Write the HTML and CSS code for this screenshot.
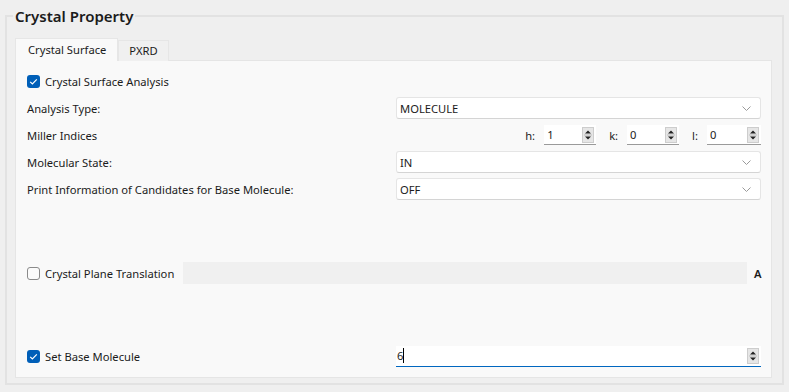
FILE: index.html
```html
<!DOCTYPE html>
<html lang="en">

<head>
    <meta charset="UTF-8">
    <title>Crystal Property</title>
    <link rel="stylesheet" href="styles.css">
</head>

<body>
    <fieldset class="group">
        <legend>Crystal Property</legend>

        <div class="tabs">
            <div class="tab active">Crystal Surface</div>
            <div class="tab narrow">PXRD</div>
        </div>

        <div class="panel">
            <div class="check-row">
                <span class="box on"><svg width="13" height="13" viewBox="0 0 13 13"><polyline points="3.2,6.8 5.4,9 9.8,4.4" fill="none" stroke="#fff" stroke-width="1.2"/></svg></span>
                <span>Crystal Surface Analysis</span>
            </div>

            <div class="row">
                <span>Analysis Type:</span>
                <div class="combo">
                    <span>MOLECULE</span>
                    <svg width="9" height="5" viewBox="0 0 9 5"><polyline points="0.5,0.5 4.5,4.5 8.5,0.5" fill="none" stroke="#9a9a9a" stroke-width="1"/></svg>
                </div>
            </div>

            <div class="row">
                <span>Miller Indices</span>
                <div class="miller">
                    <span class="idx">h:</span>
                    <div class="spin small"><span>1</span><span class="spin-btn"><svg width="10" height="14" viewBox="0 0 10 14"><polygon points="2,5.5 5,2.5 8,5.5" fill="#222"/><line x1="1" y1="7" x2="9" y2="7" stroke="#bdbdbd"/><polygon points="2,8.5 8,8.5 5,11.5" fill="#222"/></svg></span></div>
                    <span class="idx">k:</span>
                    <div class="spin small"><span>0</span><span class="spin-btn"><svg width="10" height="14" viewBox="0 0 10 14"><polygon points="2,5.5 5,2.5 8,5.5" fill="#222"/><line x1="1" y1="7" x2="9" y2="7" stroke="#bdbdbd"/><polygon points="2,8.5 8,8.5 5,11.5" fill="#222"/></svg></span></div>
                    <span class="idx">l:</span>
                    <div class="spin small last"><span>0</span><span class="spin-btn"><svg width="10" height="14" viewBox="0 0 10 14"><polygon points="2,5.5 5,2.5 8,5.5" fill="#222"/><line x1="1" y1="7" x2="9" y2="7" stroke="#bdbdbd"/><polygon points="2,8.5 8,8.5 5,11.5" fill="#222"/></svg></span></div>
                </div>
            </div>

            <div class="row">
                <span>Molecular State:</span>
                <div class="combo">
                    <span>IN</span>
                    <svg width="9" height="5" viewBox="0 0 9 5"><polyline points="0.5,0.5 4.5,4.5 8.5,0.5" fill="none" stroke="#9a9a9a" stroke-width="1"/></svg>
                </div>
            </div>

            <div class="row">
                <span>Print Information of Candidates for Base Molecule:</span>
                <div class="combo">
                    <span>OFF</span>
                    <svg width="9" height="5" viewBox="0 0 9 5"><polyline points="0.5,0.5 4.5,4.5 8.5,0.5" fill="none" stroke="#9a9a9a" stroke-width="1"/></svg>
                </div>
            </div>

            <div class="check-row translation">
                <span class="box"></span>
                <span>Crystal Plane Translation</span>
                <div class="disabled-input"></div>
                <span class="unit">A</span>
            </div>

            <div class="row base">
                <div class="check-row">
                    <span class="box on"><svg width="13" height="13" viewBox="0 0 13 13"><polyline points="3.2,6.8 5.4,9 9.8,4.4" fill="none" stroke="#fff" stroke-width="1.2"/></svg></span>
                    <span>Set Base Molecule</span>
                </div>
                <div class="spin focus"><span>6<i class="caret"></i></span><span class="spin-btn"><svg width="10" height="14" viewBox="0 0 10 14"><polygon points="2,5.5 5,2.5 8,5.5" fill="#222"/><line x1="1" y1="7" x2="9" y2="7" stroke="#bdbdbd"/><polygon points="2,8.5 8,8.5 5,11.5" fill="#222"/></svg></span></div>
            </div>
        </div>
    </fieldset>
</body>

</html>
```

FILE: styles.css
```css
body {
    margin: 0;
    background-color: #efefef;
    font-family: "Noto Sans", "Open Sans", sans-serif;
    font-size: 11.2px;
    color: #1b1b1b;
}

.group {
    margin: 6px 5px 0 5px;
    padding: 12px 10px 5px 8px;
    border: 2px solid #e2e2e2;
    min-width: 0;
}

.group legend {
    font-size: 15px;
    font-weight: 600;
    line-height: 20px;
    padding: 0 2px;
    margin-left: -2px;
}

.tabs {
    display: flex;
    align-items: flex-end;
}

.tab {
    height: 20px;
    line-height: 20px;
    padding: 0 12px;
    background-color: #f0f0f0;
    border: 1px solid #e6e6e6;
    border-bottom: none;
    margin-bottom: -1px;
}

.tab.narrow {
    padding: 0 10px;
}

.tab.active {
    height: 22px;
    line-height: 22px;
    padding: 0 11px 0 12px;
    background-color: #f9f9f9;
    position: relative;
}

.panel {
    background-color: #f9f9f9;
    border: 1px solid #e5e5e5;
    padding: 9px 10px 10px 11px;
}

.check-row {
    display: flex;
    align-items: center;
    height: 22px;
}

.box {
    width: 11px;
    height: 11px;
    border: 1px solid #8a8a8a;
    border-radius: 3px;
    background-color: #fbfbfb;
    margin-right: 5px;
    flex-shrink: 0;
}

.box.on {
    width: 13px;
    height: 13px;
    border: none;
    background-color: #005fb8;
}

.box svg {
    display: block;
}

.row {
    display: grid;
    grid-template-columns: 369px 1fr;
    align-items: center;
    height: 22px;
    margin-top: 5px;
}

.combo {
    height: 20px;
    display: flex;
    align-items: center;
    justify-content: space-between;
    padding: 0 9px 0 3px;
    background-color: #fff;
    border: 1px solid #e5e5e5;
    border-bottom-color: #d4d4d4;
    border-radius: 3px;
}

.miller {
    display: flex;
    align-items: center;
    justify-content: flex-end;
}

.idx {
    margin: 0 9px 0 13px;
}

.spin {
    height: 20px;
    display: flex;
    align-items: center;
    justify-content: space-between;
    padding: 0 2px 0 3px;
    background-color: #fff;
    border-bottom: 1px solid #9a9a9a;
}

.spin.small {
    width: 47px;
    height: 19px;
}

.spin.small.last {
    width: 49px;
}

.spin-btn {
    width: 10px;
    height: 14px;
    background-color: #e6e6e6;
    border: 1px solid #cdcdcd;
}

.spin-btn svg {
    display: block;
}

.spin.focus {
    height: 20px;
    border-bottom: 1px solid #0067c0;
    padding-left: 1px;
}

.caret {
    display: inline-block;
    width: 1px;
    height: 15px;
    background-color: #000;
    vertical-align: -3px;
}

.translation {
    margin-top: 62px;
}

.disabled-input {
    flex: 1;
    height: 22px;
    margin-left: 9px;
    background-color: #f0f0f0;
}

.unit {
    margin-left: 7px;
    font-weight: 600;
    width: 7px;
}

.row.base {
    margin-top: 61px;
}
```
